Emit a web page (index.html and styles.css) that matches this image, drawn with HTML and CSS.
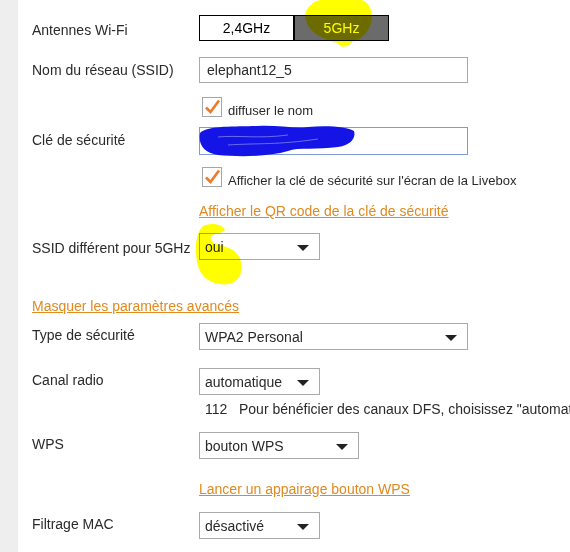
FILE: index.html
```html
<!DOCTYPE html>
<html lang="fr">
<head>
  <meta charset="UTF-8" />
  <title>Wi-Fi</title>
  <link rel="stylesheet" href="styles.css">
</head>
<body>
<div class="side"></div>

<main class="form">
  <div class="row">
    <label class="lbl lbl-mid">Antennes Wi-Fi</label>
    <div class="toggle">
      <span class="seg">2,4GHz</span>
      <span class="seg seg-on">5GHz</span>
    </div>
  </div>

  <div class="row mt-16">
    <label class="lbl lbl-5">Nom du réseau (SSID)</label>
    <div class="input">elephant12_5</div>
  </div>

  <div class="row mt-14">
    <span></span>
    <div class="check">
      <svg width="20" height="20" viewBox="0 0 20 20"><rect x="0.5" y="0.5" width="19" height="19" fill="#fff" stroke="#a6a6a6"/><path d="M4 10.5 L8.5 15 L17 3.5" fill="none" stroke="#ec7a2c" stroke-width="2.6"/></svg>
      <span>diffuser le nom</span>
    </div>
  </div>

  <div class="row mt-11">
    <label class="lbl lbl-5">Clé de sécurité</label>
    <div class="input input-key"></div>
  </div>

  <div class="row mt-12">
    <span></span>
    <div class="check">
      <svg width="20" height="20" viewBox="0 0 20 20"><rect x="0.5" y="0.5" width="19" height="19" fill="#fff" stroke="#a6a6a6"/><path d="M4 10.5 L8.5 15 L17 3.5" fill="none" stroke="#ec7a2c" stroke-width="2.6"/></svg>
      <span>Afficher la clé de sécurité sur l'écran de la Livebox</span>
    </div>
  </div>

  <div class="row mt-17">
    <span></span>
    <a class="link" href="#">Afficher le QR code de la clé de sécurité</a>
  </div>

  <div class="row mt-14">
    <label class="lbl lbl-mid">SSID différent pour 5GHz</label>
    <div class="select sel-s"><span>oui</span><i class="arrow"></i></div>
  </div>

  <div class="mt-38">
    <a class="link" href="#">Masquer les paramètres avancés</a>
  </div>

  <div class="row mt-9">
    <label class="lbl">Type de sécurité</label>
    <div class="select sel-l"><span>WPA2 Personal</span><i class="arrow"></i></div>
  </div>

  <div class="row mt-18">
    <label class="lbl">Canal radio</label>
    <div class="select sel-s"><span>automatique</span><i class="arrow"></i></div>
  </div>

  <div class="row mt-6">
    <span></span>
    <div class="note">112 &nbsp;&nbsp;Pour bénéficier des canaux DFS, choisissez "automatique"</div>
  </div>

  <div class="row mt-15">
    <label class="lbl">WPS</label>
    <div class="select sel-m"><span>bouton WPS</span><i class="arrow"></i></div>
  </div>

  <div class="row mt-22">
    <span></span>
    <a class="link" href="#">Lancer un appairage bouton WPS</a>
  </div>

  <div class="row mt-15">
    <label class="lbl">Filtrage MAC</label>
    <div class="select sel-s"><span>désactivé</span><i class="arrow"></i></div>
  </div>
</main>

<!-- annotations drawn over the screenshot -->
<svg class="mark mark-5g" width="72" height="52" viewBox="0 0 72 52">
  <path d="M8 6 C12 0 42 -2 58 2 C68 6 70 18 66 28 C62 38 54 42 48 44 C44 50 36 50 34 45 C20 42 4 34 2 22 C0 14 4 9 8 6 Z" fill="#ffff00"/>
</svg>
<svg class="mark mark-oui" width="54" height="66" viewBox="0 0 54 66">
  <path d="M10 4 C18 0 30 2 32 8 C30 12 22 10 18 14 C16 22 26 22 36 26 C46 30 50 40 48 50 C46 60 36 64 26 62 C14 60 6 52 4 40 C2 28 2 12 10 4 Z" fill="#ffff00"/>
</svg>
<svg class="scribble" width="160" height="36" viewBox="0 0 160 36">
  <path d="M2 10 C10 2 40 4 60 3 C80 2 96 6 110 4 C130 2 150 4 156 8 C158 14 154 22 140 24 C120 27 100 24 90 28 C70 34 40 34 20 32 C6 30 0 22 2 10 Z" fill="#1414e6"/>
  <path d="M20 14 C40 12 60 16 90 12 M30 22 C60 20 80 22 120 16" fill="none" stroke="#6b6bf0" stroke-width="1"/>
</svg>
</body>
</html>
```

FILE: styles.css
```css
* {
  margin: 0;
  padding: 0;
  box-sizing: border-box;
}

body {
  font-family: 'Liberation Sans', Arial, sans-serif;
  font-size: 14px;
  color: #2a2a2a;
  background-color: #fff;
  width: 570px;
  height: 552px;
  overflow: hidden;
  position: relative;
  display: flex;
}

.side {
  width: 18px;
  background-color: #eeeeee;
  flex-shrink: 0;
}

.form {
  padding: 15px 0 0 14px;
  flex: 1;
  white-space: nowrap;
  overflow: hidden;
}

.row {
  display: grid;
  grid-template-columns: 167px 1fr;
  align-items: start;
}

.lbl {
  line-height: 16px;
  padding-top: 4px;
}

.lbl-5 { padding-top: 5px; }
.lbl-mid { padding-top: 7px; }

.mt-6 { margin-top: 6px; }
.mt-9 { margin-top: 9px; }
.mt-11 { margin-top: 11px; }
.mt-12 { margin-top: 12px; }
.mt-14 { margin-top: 14px; }
.mt-15 { margin-top: 15px; }
.mt-16 { margin-top: 16px; }
.mt-17 { margin-top: 17px; }
.mt-18 { margin-top: 18px; }
.mt-22 { margin-top: 22px; }
.mt-38 { margin-top: 38px; }

.toggle {
  display: flex;
  width: 190px;
  height: 26px;
  border: 1px solid #000;
}

.seg {
  flex: 1;
  display: flex;
  align-items: center;
  justify-content: center;
  background-color: #fff;
  color: #000;
}

.seg-on {
  background-color: #6b6b6b;
  color: #fff;
  border-left: 2px solid #000;
}

.input {
  width: 269px;
  height: 26px;
  border: 1px solid #a9a9a9;
  padding-left: 7px;
  line-height: 24px;
}

.input-key {
  height: 28px;
  border-color: #7f9bd4;
}

.check {
  display: flex;
  align-items: center;
  gap: 6px;
  margin-left: 3px;
  font-size: 13px;
  height: 19px;
}

.check svg {
  display: block;
}

.check span {
  padding-top: 8px;
}

.link {
  color: #e08a20;
  text-decoration: underline;
  line-height: 16px;
  display: inline-block;
  justify-self: start;
}

.select {
  height: 27px;
  border: 1px solid #a9a9a9;
  background-color: #fff;
  display: flex;
  align-items: center;
  justify-content: space-between;
  padding: 0 10px 0 5px;
}

.sel-s { width: 121px; }
.sel-m { width: 160px; }
.sel-l { width: 269px; }

.arrow {
  width: 0;
  height: 0;
  border-left: 6px solid transparent;
  border-right: 6px solid transparent;
  border-top: 6px solid #222;
  margin-top: 2px;
}

.note {
  line-height: 16px;
  padding-left: 6px;
}

.mark {
  position: absolute;
  mix-blend-mode: multiply;
}

.mark-5g {
  left: 304px;
  top: -2px;
}

.mark-oui {
  left: 193px;
  top: 222px;
}

.scribble {
  position: absolute;
  left: 198px;
  top: 123px;
}
```
